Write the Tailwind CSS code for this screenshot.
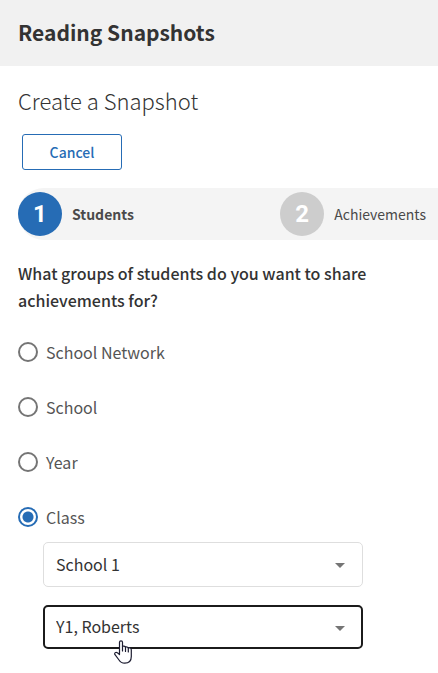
<!DOCTYPE html>
<html lang="en">
<head>
  <meta charset="UTF-8">
  <meta name="viewport" content="width=device-width, initial-scale=1.0">
  <title>Reading Snapshots</title>
  <script src="https://cdn.jsdelivr.net/npm/@tailwindcss/browser@4"></script>
</head>
<body class="bg-white text-[#333] font-['Noto_Sans_CJK_SC',sans-serif]">
  <header class="bg-[#f1f1f1] pl-[18px] pt-4 pb-[18px]">
    <h1 class="text-[21px] leading-8 font-bold">Reading Snapshots</h1>
  </header>

  <main class="pl-[18px] pt-[18px] pb-6">
    <h2 class="text-[22px] leading-8 font-light">Create a Snapshot</h2>
    <button type="button" class="block ml-1 mt-[18px] w-[100px] h-9 border border-[#266cb5] rounded-[3px] text-sm font-medium text-[#266cb5] hover:bg-blue-50">Cancel</button>

    <ol class="flex items-center justify-between mt-[18px] h-[52px] pr-3 bg-[#f4f4f4] rounded-l-full text-sm text-[#4a4a4a]">
      <li class="flex items-center gap-[10px] font-bold">
        <span class="flex items-center justify-center size-11 rounded-full bg-[#266cb5] text-white text-2xl font-bold font-[Roboto,sans-serif]">1</span>
        Students
      </li>
      <li class="flex items-center gap-[10px]">
        <span class="flex items-center justify-center size-11 rounded-full bg-[#cdcdcd] text-white text-2xl font-bold font-[Roboto,sans-serif]">2</span>
        Achievements
      </li>
    </ol>

    <form class="pt-5">
      <fieldset>
        <legend class="max-w-[380px] text-base leading-[27px] font-medium">What groups of students do you want to share achievements for?</legend>

        <div class="mt-[26px] grid gap-[31px] text-base leading-6 text-[#555]">
          <label class="flex items-center gap-2">
            <input type="radio" name="group" value="network" class="appearance-none size-5 rounded-full border-2 border-[#757575] checked:border-[#266cb5] checked:bg-[radial-gradient(#266cb5_5px,transparent_6px)]">
            School Network
          </label>
          <label class="flex items-center gap-2">
            <input type="radio" name="group" value="school" class="appearance-none size-5 rounded-full border-2 border-[#757575] checked:border-[#266cb5] checked:bg-[radial-gradient(#266cb5_5px,transparent_6px)]">
            School
          </label>
          <label class="flex items-center gap-2">
            <input type="radio" name="group" value="year" class="appearance-none size-5 rounded-full border-2 border-[#757575] checked:border-[#266cb5] checked:bg-[radial-gradient(#266cb5_5px,transparent_6px)]">
            Year
          </label>
          <label class="flex items-center gap-2">
            <input type="radio" name="group" value="class" checked class="appearance-none size-5 rounded-full border-2 border-[#757575] checked:border-[#266cb5] checked:bg-[radial-gradient(#266cb5_5px,transparent_6px)]">
            Class
          </label>
        </div>
      </fieldset>

      <div class="mt-[13px] ml-[25px] max-w-80 grid gap-[18px] text-base leading-6">
        <div class="grid items-center">
          <select aria-label="School" class="col-start-1 row-start-1 appearance-none w-full h-[45px] pl-3 pb-[2px] border border-[#dedede] rounded-[5px] bg-white">
            <option>School 1</option>
          </select>
          <svg class="col-start-1 row-start-1 justify-self-end mr-[18px] mt-[2px] w-[10px] h-[5px] pointer-events-none" viewBox="0 0 10 5" fill="#757575"><path d="M0 0h10L5 5z"/></svg>
        </div>
        <div class="relative grid items-center">
          <select aria-label="Class" class="col-start-1 row-start-1 appearance-none w-full h-11 pl-[11px] pb-[2px] border-2 border-[#1b1b1b] rounded-[5px] bg-white">
            <option>Y1, Roberts</option>
          </select>
          <svg class="col-start-1 row-start-1 justify-self-end mr-[18px] mt-[2px] w-[10px] h-[5px] pointer-events-none" viewBox="0 0 10 5" fill="#757575"><path d="M0 0h10L5 5z"/></svg>
          <!-- pointer -->
          <svg class="absolute left-[71px] top-[35px] w-[18px] h-6 pointer-events-none" viewBox="0 0 18 24" fill="#fff" stroke="#1c1c30" stroke-width="1.2" stroke-linejoin="round" stroke-linecap="round"><path d="M5.5 14.5V2.3a1.5 1.5 0 0 1 3 0V6.5c.5-.7 2.6-.6 3 .7.7-.6 2.5-.3 2.8.9 1.2-.7 3 0 3 1.8V16.5c0 4-2.5 6.700-6.600 6.700-2.700 0-4.400-1-5.700-3.200L1 14.700c-1-1.700.9-3.200 2.400-1.900z"/><path d="M8.500 6.500V11M11.500 7.200V11.500M14.300 8.200V12" fill="none"/></svg>
        </div>
      </div>
    </form>
  </main>
</body>
</html>
